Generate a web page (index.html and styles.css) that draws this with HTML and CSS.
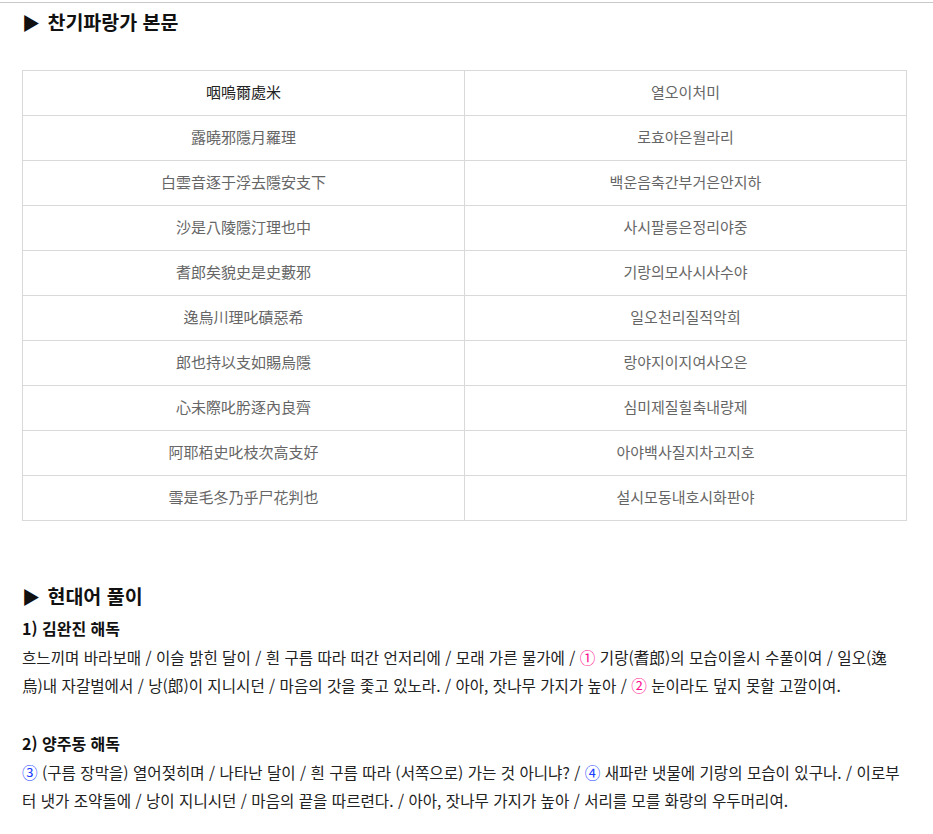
FILE: index.html
```html
<!DOCTYPE html>
<html lang="ko">
<head>
<meta charset="utf-8">
<title>찬기파랑가</title>
<link rel="stylesheet" href="styles.css">
</head>
<body>
<div class="page">
  <h2 class="section-title"><span class="arrow">▶</span> 찬기파랑가 본문</h2>
  <table class="poem">
    <tbody>
      <tr><td class="first">咽嗚爾處米</td><td>열오이처미</td></tr>
      <tr><td>露曉邪隱月羅理</td><td>로효야은월라리</td></tr>
      <tr><td>白雲音逐于浮去隱安支下</td><td>백운음축간부거은안지하</td></tr>
      <tr><td>沙是八陵隱汀理也中</td><td>사시팔릉은정리야중</td></tr>
      <tr><td>耆郎矣貌史是史藪邪</td><td>기랑의모사시사수야</td></tr>
      <tr><td>逸烏川理叱磧惡希</td><td>일오천리질적악희</td></tr>
      <tr><td>郎也持以支如賜烏隱</td><td>랑야지이지여사오은</td></tr>
      <tr><td>心未際叱肹逐內良齊</td><td>심미제질힐축내량제</td></tr>
      <tr><td>阿耶栢史叱枝次高支好</td><td>아야백사질지차고지호</td></tr>
      <tr><td>雪是毛冬乃乎尸花判也</td><td>설시모동내호시화판야</td></tr>
    </tbody>
  </table>

  <h2 class="section-title second"><span class="arrow">▶</span> 현대어 풀이</h2>
  <h3 class="sub-title">1) 김완진 해독</h3>
  <p class="body-text">흐느끼며 바라보매 / 이슬 밝힌 달이 / 흰 구름 따라 떠간 언저리에 / 모래 가른 물가에 / <span class="num pink">①</span> 기랑(耆郎)의 모습이올시 수풀이여 / 일오(逸烏)내 자갈벌에서 / 낭(郎)이 지니시던 / 마음의 갓을 좇고 있노라. / 아아, 잣나무 가지가 높아 / <span class="num pink">②</span> 눈이라도 덮지 못할 고깔이여.</p>
  <div class="spacer"></div>
  <h3 class="sub-title">2) 양주동 해독</h3>
  <p class="body-text"><span class="num blue">③</span> (구름 장막을) 열어젖히며 / 나타난 달이 / 흰 구름 따라 (서쪽으로) 가는 것 아니냐? / <span class="num blue">④</span> 새파란 냇물에 기랑의 모습이 있구나. / 이로부터 냇가 조약돌에 / 낭이 지니시던 / 마음의 끝을 따르련다. / 아아, 잣나무 가지가 높아 / 서리를 모를 화랑의 우두머리여.</p>
</div>
</body>
</html>
```

FILE: styles.css
```css
html, body {
  margin: 0;
  padding: 0;
  background: #fff;
}

body {
  padding-top: 2px;
  font-family: "Noto Sans CJK KR", "Noto Sans", sans-serif;
  color: #222;
}

.page {
  border-top: 1px solid #c8c8c8;
  padding: 5px 26px 0 22px;
}

.section-title {
  margin: 0;
  font-size: 19.5px;
  line-height: 28px;
  font-weight: 700;
  color: #111;
}

.section-title .arrow {
  font-size: 18px;
  margin-right: 2px;
}

.section-title.second {
  margin-top: 61px;
  margin-bottom: 4px;
}

.poem {
  width: 100%;
  margin-top: 34px;
  border-collapse: collapse;
  table-layout: fixed;
  border: 1px solid #d9d9d9;
}

.poem td {
  height: 41px;
  padding: 0 0 3px;
  border: 1px solid #d9d9d9;
  text-align: center;
  vertical-align: middle;
  font-size: 15px;
  color: #666;
}

.poem td.first {
  color: #222;
}

.sub-title {
  margin: 0;
  font-size: 16px;
  line-height: 28px;
  font-weight: 700;
  color: #111;
}

.body-text {
  margin: 1px 0 0;
  font-size: 15.6px;
  line-height: 28px;
  color: #222;
}

.spacer {
  height: 30px;
}

.pink {
  color: #ff0a8c;
}

.blue {
  color: #1a3cff;
}
```
